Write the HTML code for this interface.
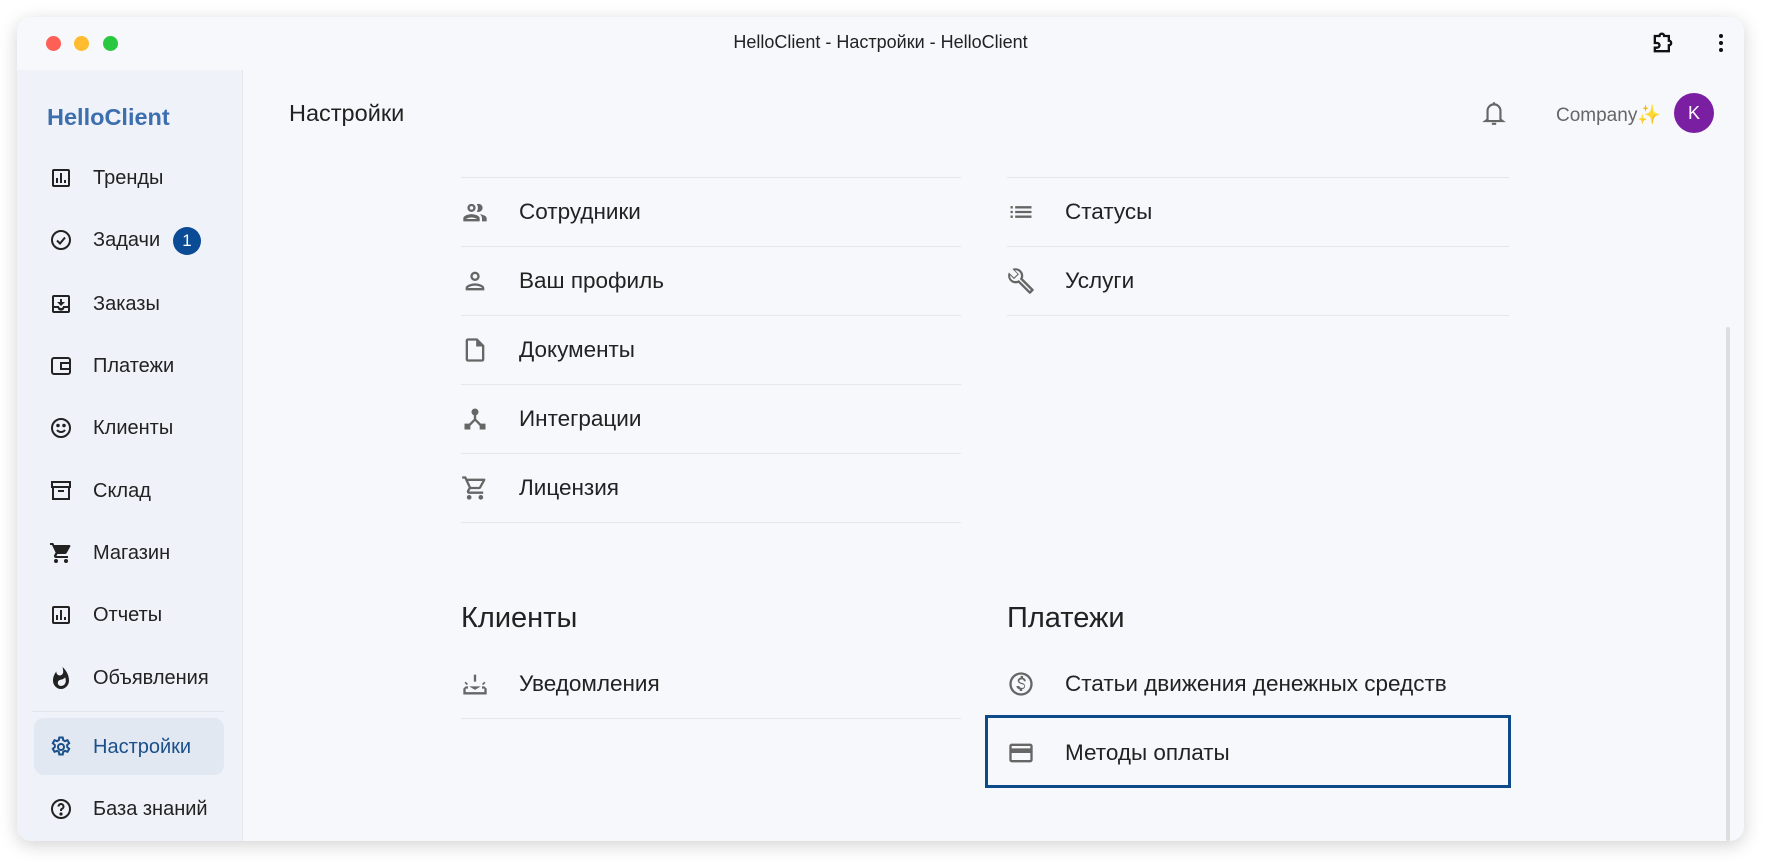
<!DOCTYPE html>
<html><head><meta charset="utf-8"><style>
*{margin:0;padding:0;box-sizing:border-box}
body{width:1770px;height:866px;background:#fff;font-family:"Liberation Sans","Noto Sans CJK SC",sans-serif;position:relative;overflow:hidden;color:#222}
.win{position:absolute;left:17px;top:17px;width:1727px;height:824px;border-radius:14px;background:#f7f8fb;box-shadow:0 4px 18px rgba(0,0,0,.18);overflow:hidden}
.tl{position:absolute;top:19px;width:15px;height:15px;border-radius:50%}
.title{position:absolute;top:15px;left:0;width:1727px;text-align:center;font-size:18px;color:#222}
.side{position:absolute;left:0;top:53px;width:226px;height:771px;background:#eff2f8;border-right:1px solid #e3e6ec}
.logo{position:absolute;left:30px;top:34px;font-size:23.5px;font-weight:bold;color:#3d6fae}
.nav{position:absolute;left:0;width:226px;height:40px;font-size:20px;color:#222}
.nav svg{position:absolute;left:32px;top:9px;width:24px;height:24px}
.nav span{position:absolute;left:76px;top:10px}
.sel{position:absolute;left:17px;top:648px;width:190px;height:57px;border-radius:10px;background:#e2e8f1}
.row{position:absolute;height:69px;border-bottom:1px solid #e5e7eb;font-size:22.5px;color:#222}
.row svg{position:absolute;left:0;top:20px;width:28px;height:28px;fill:#666}
.row span{position:absolute;left:58px;top:21px}
h2{position:absolute;font-size:29px;font-weight:normal;color:#222}
</style></head><body>
<div class="win">
<div class="tl" style="left:29px;background:#fe5f57"></div>
<div class="tl" style="left:57px;background:#febc2e"></div>
<div class="tl" style="left:86px;background:#28c840"></div>
<div class="title">HelloClient - Настройки - HelloClient</div>
<svg style="position:absolute;left:1632px;top:12px" width="28" height="28" viewBox="0 0 24 24" fill="none" stroke="#111" stroke-width="2"><path d="M5 6h4a2 2 0 0 1 4 0h4v4a2 2 0 0 1 0 4v5H5v-3h2a2 2 0 0 0 0-4H5z"/></svg>
<svg style="position:absolute;left:1701px;top:14px" width="6" height="24" viewBox="0 0 6 24" fill="#111"><circle cx="3" cy="5" r="2"/><circle cx="3" cy="12" r="2"/><circle cx="3" cy="19" r="2"/></svg>

<div class="side">
<div class="logo">HelloClient</div>
<div class="sel"></div>
<div style="position:absolute;left:15px;top:641px;width:192px;height:1px;background:#e2e5ea"></div>
</div>

<div style="position:absolute;left:0;top:53px">
<div class="nav" style="top:87px"><svg viewBox="0 0 24 24" fill="#222"><path d="M19 3H5a2 2 0 0 0-2 2v14a2 2 0 0 0 2 2h14a2 2 0 0 0 2-2V5a2 2 0 0 0-2-2zm0 16H5V5h14zM7 12h2v5H7zm4-5h2v10h-2zm4 7h2v3h-2z"/></svg><span>Тренды</span></div>
<div class="nav" style="top:149px"><svg viewBox="0 0 24 24" fill="none" stroke="#222" stroke-width="2"><circle cx="12" cy="12" r="9"/><path d="M8 12.5l3 3 5-6"/></svg><span>Задачи</span><div style="position:absolute;left:156px;top:8px;width:28px;height:28px;border-radius:50%;background:#0b4a94;color:#fff;font-size:17px;text-align:center;line-height:28px">1</div></div>
<div class="nav" style="top:213px"><svg viewBox="0 0 24 24" fill="#222"><path d="M19 3H5a2 2 0 0 0-2 2v14a2 2 0 0 0 2 2h14a2 2 0 0 0 2-2V5a2 2 0 0 0-2-2zm0 16H5v-3h3.6a3.5 3.5 0 0 0 6.8 0H19zm0-5h-5a2 2 0 0 1-4 0H5V5h14zm-3-4h-3V7h-2v3H8l4 4z"/></svg><span>Заказы</span></div>
<div class="nav" style="top:275px"><svg viewBox="0 0 24 24" fill="none" stroke="#222" stroke-width="2"><rect x="3" y="4" width="18" height="16" rx="2"/><rect x="12" y="9" width="9" height="6"/></svg><span>Платежи</span></div>
<div class="nav" style="top:337px"><svg viewBox="0 0 24 24" fill="none" stroke="#222" stroke-width="2"><circle cx="12" cy="12" r="9"/><path d="M8 14a5 5 0 0 0 8 0"/><circle cx="9" cy="9.5" r=".8" fill="#222"/><circle cx="15" cy="9.5" r=".8" fill="#222"/></svg><span>Клиенты</span></div>
<div class="nav" style="top:400px"><svg viewBox="0 0 24 24" fill="none" stroke="#222" stroke-width="2"><rect x="3" y="3" width="18" height="5"/><path d="M4 8v12h16V8M9 12h6"/></svg><span>Склад</span></div>
<div class="nav" style="top:462px"><svg viewBox="0 0 24 24" fill="#222"><path d="M7 18a2 2 0 1 0 0 4 2 2 0 0 0 0-4zm10 0a2 2 0 1 0 0 4 2 2 0 0 0 0-4zM1 2v2h2l3.6 7.6-1.4 2.4A2 2 0 0 0 7 17h12v-2H7.4l1.1-2h7.5a2 2 0 0 0 1.7-1l3.6-6.5A1 1 0 0 0 20.4 4H5.2l-.9-2z"/></svg><span>Магазин</span></div>
<div class="nav" style="top:524px"><svg viewBox="0 0 24 24" fill="#222"><path d="M19 3H5a2 2 0 0 0-2 2v14a2 2 0 0 0 2 2h14a2 2 0 0 0 2-2V5a2 2 0 0 0-2-2zm0 16H5V5h14zM7 12h2v5H7zm4-5h2v10h-2zm4 7h2v3h-2z"/></svg><span>Отчеты</span></div>
<div class="nav" style="top:587px"><svg viewBox="0 0 24 24" fill="#222"><path d="M13.5 1s.7 2.6.7 4.8c0 2-1.3 3.7-3.4 3.7S7.3 7.8 7.3 5.8V5.5C5.3 8 4 11.2 4 14.7 4 19 7.6 23 12 23s8-4 8-8.3C20 9.3 17.4 4.5 13.5 1zM12 20c-1.8 0-3.2-1.4-3.2-3.1 0-1.6 1-2.8 2.8-3.1 1.8-.4 3.6-1.2 4.6-2.6.4 1.3.6 2.6.6 4A4.9 4.9 0 0 1 12 20z"/></svg><span>Объявления</span></div>
<div class="nav" style="top:656px;color:#1a4f8a"><svg viewBox="0 0 24 24" fill="none" stroke="#1a4f8a" stroke-width="2"><circle cx="12" cy="12" r="3"/><path d="M10.3 2.5h3.4l.5 2.6 1.8 1 2.5-.9 1.7 3-2 1.7v2.2l2 1.7-1.7 3-2.5-.9-1.8 1-.5 2.6h-3.4l-.5-2.6-1.8-1-2.5.9-1.7-3 2-1.7v-2.2l-2-1.7 1.7-3 2.5.9 1.8-1z"/></svg><span>Настройки</span></div>
<div class="nav" style="top:718px"><svg viewBox="0 0 24 24" fill="none" stroke="#222" stroke-width="2"><circle cx="12" cy="12" r="9"/><path d="M9.5 9.5a2.5 2.5 0 1 1 3.5 2.3c-.7.4-1 .9-1 1.7v.5"/><circle cx="12" cy="17" r=".6" fill="#222"/></svg><span>База знаний</span></div>
</div>

<div style="position:absolute;left:272px;top:83px;font-size:23.5px;color:#222">Настройки</div>
<svg style="position:absolute;left:1464px;top:82px" width="26" height="28" viewBox="0 0 24 26" fill="none" stroke="#666" stroke-width="2"><path d="M6 19V11a6 6 0 0 1 12 0v8l2 1.5H4zM10 23h4M12 3v2"/></svg>
<div style="position:absolute;left:1539px;top:86px;font-size:19px;color:#666">Company<span style="color:#f4d35e">✨</span></div>
<div style="position:absolute;left:1657px;top:76px;width:40px;height:40px;border-radius:50%;background:#7b1fa2;color:#fff;font-size:18px;text-align:center;line-height:40px">K</div>
<div style="position:absolute;left:1709px;top:310px;width:4px;height:514px;background:#ddd;border-radius:2px"></div>

<div class="row" style="left:444px;top:92px;width:500px"></div>
<div class="row" style="left:444px;top:161px;width:500px"><svg viewBox="0 0 24 24"><path d="M9 13.8c-2.3 0-7 1.2-7 3.5V20h14v-2.7c0-2.3-4.7-3.5-7-3.5zM4.3 18c.8-.6 2.9-1.3 4.7-1.3s3.9.7 4.7 1.3zM9 12a3.5 3.5 0 1 0 0-7 3.5 3.5 0 0 0 0 7zm0-5a1.5 1.5 0 1 1 0 3 1.5 1.5 0 0 1 0-3zm7 6.9c1.2.8 2 1.9 2 3.4V20h4v-2.7c0-2-3.5-3.2-6-3.4zM15 12a3.5 3.5 0 0 0 0-7c-.5 0-1 .1-1.5.3a5.5 5.5 0 0 1 0 6.4c.5.2 1 .3 1.5.3z"/></svg><span>Сотрудники</span></div>
<div class="row" style="left:444px;top:230px;width:500px"><svg viewBox="0 0 24 24"><path d="M12 6a2 2 0 1 1 0 4 2 2 0 0 1 0-4m0 10c2.7 0 5.8 1.3 6 2H6c.2-.7 3.3-2 6-2m0-12a4 4 0 1 0 0 8 4 4 0 0 0 0-8zm0 10c-2.7 0-8 1.3-8 4v2h16v-2c0-2.7-5.3-4-8-4z"/></svg><span>Ваш профиль</span></div>
<div class="row" style="left:444px;top:299px;width:500px"><svg viewBox="0 0 24 24"><path d="M14 2H6a2 2 0 0 0-2 2v16a2 2 0 0 0 2 2h12a2 2 0 0 0 2-2V8zm4 18H6V4h7v5h5z"/></svg><span>Документы</span></div>
<div class="row" style="left:444px;top:368px;width:500px"><svg viewBox="0 0 24 24"><path d="M17 16l-4-4V8.8a3 3 0 1 0-2 0V12l-4 4H3v5h5v-3.1l4-4.2 4 4.2V21h5v-5z"/></svg><span>Интеграции</span></div>
<div class="row" style="left:444px;top:437px;width:500px"><svg viewBox="0 0 24 24"><path d="M15.5 13a2 2 0 0 0 1.7-1l3.6-6.5A1 1 0 0 0 19.9 4H5.2l-.9-2H1v2h2l3.6 7.6-1.4 2.4A2 2 0 0 0 7 17h12v-2H7l1.1-2zM6.2 6h12.1l-2.8 5H8.5zM7 18a2 2 0 1 0 0 4 2 2 0 0 0 0-4zm10 0a2 2 0 1 0 0 4 2 2 0 0 0 0-4z"/></svg><span>Лицензия</span></div>

<div class="row" style="left:990px;top:92px;width:502px"></div>
<div class="row" style="left:990px;top:161px;width:502px"><svg viewBox="0 0 24 24"><path d="M3 13h2v-2H3zm0 4h2v-2H3zm0-8h2V7H3zm4 4h14v-2H7zm0 4h14v-2H7zM7 7v2h14V7z"/></svg><span>Статусы</span></div>
<div class="row" style="left:990px;top:230px;width:502px"><svg viewBox="0 0 24 24"><path d="M22.6 19l-9.1-9.1c.9-2.3.4-5-1.5-6.9-2-2-5-2.4-7.4-1.3L9 6 6 9 1.6 4.7C.4 7.1.9 10.1 2.9 12.1c1.9 1.9 4.6 2.4 6.9 1.5l9.1 9.1c.4.4 1 .4 1.4 0l2.3-2.3c.5-.4.5-1.1 0-1.4zm-3 1.6l-9.5-9.5c-.6.5-1.3.8-2 .9-1.4.2-2.9-.2-4-1.2-1-1-1.5-2.3-1.4-3.7l3.3 3.3 4.2-4.2-3.3-3.3c1.4-.1 2.7.4 3.7 1.4 1.1 1.1 1.5 2.6 1.3 4-.1.7-.4 1.4-.9 2l9.4 9.4z"/></svg><span>Услуги</span></div>

<h2 style="left:444px;top:585px">Клиенты</h2>
<h2 style="left:990px;top:585px">Платежи</h2>
<div class="row" style="left:444px;top:633px;width:500px"><svg viewBox="0 0 24 24"><path d="M18 14h2l2 2v5H2v-5l2-2h2v2H4v3h16v-3h-2zM5 13l-2-2 1-1 2 2zm14 0l-1-1 2-2 1 1zM11 4h2v6h-2zM7 14h10l-5 3z"/></svg><span>Уведомления</span></div>
<div class="row" style="left:990px;top:633px;width:502px;border-bottom:none"><svg viewBox="0 0 24 24"><path d="M12 2a10 10 0 1 0 0 20 10 10 0 0 0 0-20zm0 18a8 8 0 1 1 0-16 8 8 0 0 1 0 16zm.9-8.9c-1.8-.5-2.3-.9-2.3-1.7 0-.8.7-1.4 2-1.4 1.3 0 1.8.6 1.9 1.6h1.6c0-1.3-.8-2.4-2.3-2.8V5h-2.1v1.5c-1.4.3-2.5 1.2-2.5 2.6 0 1.7 1.4 2.5 3.4 3 1.8.4 2.2 1.1 2.2 1.8 0 .5-.4 1.4-2 1.4-1.5 0-2.1-.7-2.2-1.6H8.1c.1 1.7 1.3 2.6 2.8 2.9V18H13v-1.5c1.4-.3 2.5-1.100 2.5-2.6 0-2-1.7-2.7-3.5-3.1z"/></svg><span>Статьи движения денежных средств</span></div>
<div style="position:absolute;left:968px;top:698px;width:526px;height:73px;border:3px solid #0d4a8a"></div>
<div class="row" style="left:990px;top:702px;width:502px;border-bottom:none"><svg viewBox="0 0 24 24"><path d="M20 4H4a2 2 0 0 0-2 2v12a2 2 0 0 0 2 2h16a2 2 0 0 0 2-2V6a2 2 0 0 0-2-2zm0 14H4v-6h16zm0-10H4V6h16z"/></svg><span>Методы оплаты</span></div>
</div>
</body></html>
